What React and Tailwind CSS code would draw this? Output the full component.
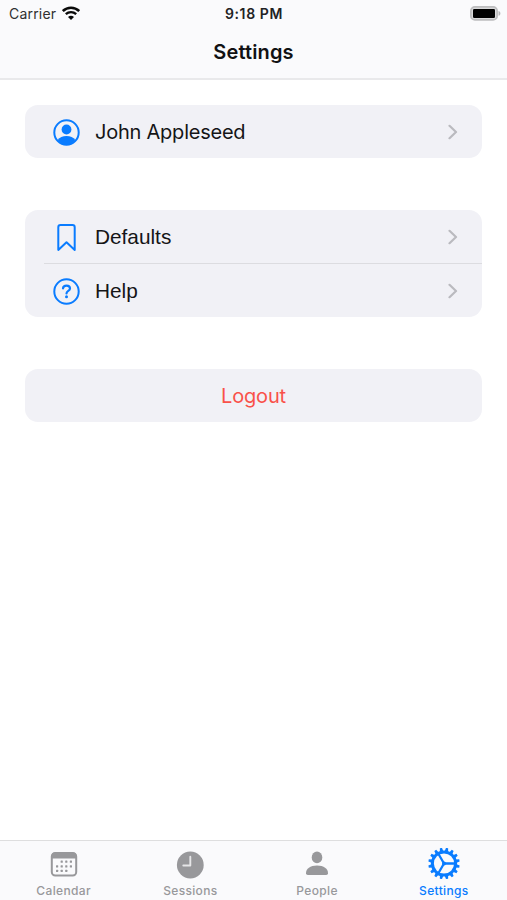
function WifiIcon() {
  return (
    <svg className="h-[14px] w-[18px]" viewBox="0 0 18 14" fill="none" stroke="#0a0a0a">
      <path d="M0.800 5.100C5.400 0.600 12.600 0.600 17.200 5.100" strokeWidth="2.600" />
      <path d="M3.800 8.200C6.800 5.300 11.200 5.300 14.200 8.200" strokeWidth="2.300" />
      <path d="M9 13.900L6 10.900C7.700 9.200 10.300 9.200 12 10.900Z" fill="#0a0a0a" stroke="none" />
    </svg>
  );
}

function BatteryIcon() {
  return (
    <svg className="h-[15px] w-[31px]" viewBox="0 0 31 15">
      <rect x="0.900" y="0.900" width="26.200" height="13" rx="4" fill="#d9d9db" stroke="#bdbdbf" strokeWidth="1.800" />
      <rect x="3" y="3" width="22" height="9" rx="1.200" fill="#000" />
      <path d="M28.500 5C31 5.600 31 9.200 28.500 9.800Z" fill="#b4b4b6" />
    </svg>
  );
}

function PersonCircleIcon() {
  return (
    <svg className="size-[27px]" viewBox="0.5 0.5 27 27" fill="#0a7cff">
      <circle cx="14" cy="14" r="12.200" fill="none" stroke="#0a7cff" strokeWidth="2" />
      <circle cx="14" cy="11" r="4.900" />
      <path d="M5.200 21.500C7 18.800 10.200 17.600 14 17.600S21 18.800 22.800 21.500C20.500 24.800 17.500 26.500 14 26.500S7.500 24.800 5.200 21.500Z" />
    </svg>
  );
}

function BookmarkIcon() {
  return (
    <svg className="size-[27px]" viewBox="0.5 0.5 27 27" fill="none" stroke="#0a7cff" strokeWidth="2" strokeLinejoin="round">
      <path d="M8 1.500H20Q22.200 1.500 22.200 3.700V26.400L14 18.800L5.800 26.400V3.700Q5.800 1.500 8 1.500Z" />
    </svg>
  );
}

function HelpIcon() {
  return (
    <svg className="size-[27px]" viewBox="0.5 0.5 27 27" fill="none" stroke="#0a7cff" strokeWidth="2" strokeLinecap="round">
      <circle cx="14" cy="14" r="12.200" />
      <path d="M10.500 10.900C10.700 9.100 12 8.200 14 8.200C16.100 8.200 17.500 9.300 17.500 11C17.500 13.400 14 13.400 14 15.900" strokeWidth="2.200" />
      <circle cx="14" cy="19.300" r="1.500" fill="#0a7cff" stroke="none" />
    </svg>
  );
}

function Chevron() {
  return (
    <svg className="h-4 w-[10px]" viewBox="0 0 10 16" fill="none" stroke="#bababf" strokeWidth="2.200">
      <path d="M1.500 1.800L8 8L1.500 14.200" strokeLinecap="round" strokeLinejoin="round" />
    </svg>
  );
}

function CalendarIcon() {
  return (
    <svg className="h-8 w-8" viewBox="0 0 32 32" fill="#98989b">
      <rect x="3.800" y="5" width="24.400" height="22.600" rx="3.500" fill="none" stroke="#98989b" strokeWidth="2" />
      <path d="M3.500 10.500V8Q3.500 4.500 7 4.500H25Q28.500 4.500 28.500 8V10.500Z" />
      {[13.6, 18.2, 22.8].map((y, row) =>
        [9, 13.6, 18.2, 22.8].map((x, col) =>
          (row === 0 && col === 0) || (row === 2 && col === 3) ? null : (
            <rect key={`${x}-${y}`} x={x - 1} y={y - 1} width="2.200" height="2.200" rx="0.500" />
          )
        )
      )}
    </svg>
  );
}

function ClockIcon() {
  return (
    <svg className="h-8 w-8" viewBox="0 0 32 32">
      <circle cx="16.300" cy="17" r="13.400" fill="#98989b" />
      <path d="M16.300 8.800V17.500H9.300" fill="none" stroke="#e6e6e8" strokeWidth="1.900" strokeLinecap="round" strokeLinejoin="round" />
    </svg>
  );
}

function PersonIcon() {
  return (
    <svg className="h-8 w-8" viewBox="0 0 32 32" fill="#98989b">
      <ellipse cx="16" cy="9.400" rx="5.300" ry="5.900" />
      <path d="M5 25.200C5 20.700 9.200 17.500 16 17.500S27 20.700 27 25.200Q27 27 25.200 27H6.800Q5 27 5 25.200Z" />
    </svg>
  );
}

function GearIcon() {
  return (
    <svg className="h-8 w-8" viewBox="0 0 32 32" fill="none" stroke="#0a7cff">
      <circle cx="16" cy="15.500" r="11.600" strokeWidth="3" />
      {Array.from({ length: 16 }, (_, i) => (
        <path key={i} d="M14.200 3.500L14.900 -0.200H17.100L17.800 3.500Z" fill="#0a7cff" stroke="none" transform={`rotate(${i * 22.5 + 11.25} 16 15.5)`} />
      ))}
      <path d="M16 15.500H27M16 15.500L10.500 6M16 15.500L10.500 25" strokeWidth="2.300" />
      <circle cx="16" cy="15.500" r="2" fill="#0a7cff" stroke="none" />
    </svg>
  );
}

const TABS = [
  { label: "Calendar", Icon: CalendarIcon },
  { label: "Sessions", Icon: ClockIcon },
  { label: "People", Icon: PersonIcon },
  { label: "Settings", Icon: GearIcon, active: true },
];

function Row({ icon, label, className }) {
  return (
    <button className="flex h-[53px] w-full items-center pt-px pr-[24px] pl-[28px] text-left">
      {icon}
      <span className={`ml-[15px] flex-1 text-[#151517] ${className}`}>{label}</span>
      <Chevron />
    </button>
  );
}

export default function App() {
  return (
    <div className="flex h-[900px] w-[507px] flex-col overflow-hidden bg-white font-['Inter',sans-serif] text-black">
      <header className="h-[80px] border-b-2 border-[#e9e9eb] bg-[#fafafc]">
        <div className="grid h-[26px] grid-cols-3 items-center pr-[6px] pl-[9px]">
          <div className="flex items-center gap-[6px]">
            <span className="text-[14px] tracking-[0.2px] text-[#303032]">Carrier</span>
            <WifiIcon />
          </div>
          <span className="pr-[2px] text-center text-[14px] font-semibold tracking-[0.6px] text-[#222224]">9:18 PM</span>
          <div className="flex justify-end">
            <BatteryIcon />
          </div>
        </div>
        <h1 className="mt-[11px] text-center text-[20px] leading-[30px] font-semibold tracking-[0.15px] text-[#111113]">Settings</h1>
      </header>

      <main className="flex flex-1 flex-col gap-[52px] px-[25px] pt-[25px]">
        <section className="rounded-[13px] bg-[#f1f1f6]">
          <Row icon={<PersonCircleIcon />} label="John Appleseed" className="text-[20px] tracking-[-0.23px]" />
        </section>

        <section className="rounded-[13px] bg-[#f1f1f6]">
          <Row icon={<BookmarkIcon />} label="Defaults" className="font-['Liberation_Sans',sans-serif] text-[20.8px]" />
          <div className="ml-[19px] h-px bg-[#dcdce0]" />
          <Row icon={<HelpIcon />} label="Help" className="font-['Liberation_Sans',sans-serif] text-[20.8px]" />
        </section>

        <button className="h-[53px] rounded-[13px] bg-[#f1f1f6] pt-px text-[20px] tracking-[-0.15px] text-[#f9514a]">Logout</button>
      </main>

      <nav className="grid h-[60px] grid-cols-4 border-t-1 border-[#dededf] bg-[#fafafc]">
        {TABS.map(({ label, Icon, active }) => (
          <button key={label} className="flex flex-col items-center pt-[7px] pl-[0.5px]">
            <Icon />
            <span
              className={`mt-[3px] text-[12px] leading-4 font-medium tracking-[0.35px] ${active ? "text-[#0a7cff]" : "text-[#98989b]"}`}
            >
              {label}
            </span>
          </button>
        ))}
      </nav>
    </div>
  );
}
